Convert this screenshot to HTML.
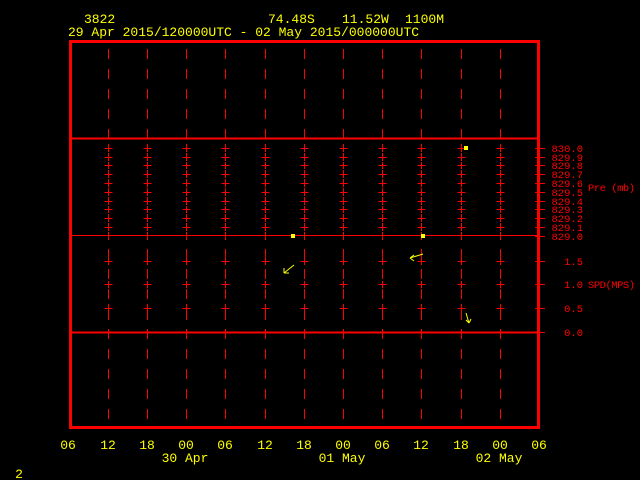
<!DOCTYPE html>
<html><head><meta charset="utf-8"><style>
html,body{margin:0;padding:0;background:#000;width:640px;height:480px;overflow:hidden}
svg{display:block}
text{font-family:"Liberation Mono","DejaVu Sans Mono",monospace;}
</style></head><body>
<svg width="640" height="480" viewBox="0 0 640 480" xmlns="http://www.w3.org/2000/svg" shape-rendering="crispEdges">
<defs>
<path id="col" stroke="#ff0000" stroke-width="1" fill="none" d="M0.5 49V59M0.5 69V79M0.5 89V99M0.5 109V119M0.5 129V139
M0.5 329V339M0.5 349V359M0.5 369V379M0.5 389V399M0.5 409V419
M-3.5 148.5H4.5M0.5 144V152M-3.5 157.5H4.5M0.5 153V161M-3.5 165.5H4.5M0.5 162V169M-3.5 174.5H4.5M0.5 170V178
M-3.5 183.5H4.5M0.5 179V187M-3.5 192.5H4.5M0.5 188V196M-3.5 201.5H4.5M0.5 197V205M-3.5 209.5H4.5M0.5 206V213
M-3.5 218.5H4.5M0.5 214V222M-3.5 227.5H4.5M0.5 223V231M0.5 232V240
M0.5 249V265M0.5 269V279M0.5 281V288M0.5 289V299M0.5 304V320
M-3.5 261.5H4.5M-3.5 284.5H4.5M-3.5 308.5H4.5"/>
</defs>
<g fill="#ffff00" font-size="13">
<text x="84" y="23">3822</text>
<text x="268" y="23">74.48S</text>
<text x="342" y="23">11.52W</text>
<text x="405" y="23">1100M</text>
<text x="68" y="36">29 Apr 2015/120000UTC - 02 May 2015/000000UTC</text>
</g>
<g stroke="#ff0000" fill="none">
<rect x="70.5" y="41.5" width="468" height="386" stroke-width="3"/>
<line x1="70" y1="138.5" x2="540" y2="138.5" stroke-width="2"/>
<line x1="70" y1="235.5" x2="540" y2="235.5" stroke-width="1"/>
<line x1="70" y1="332.5" x2="540" y2="332.5" stroke-width="2"/>
</g>
<use href="#col" x="108"/><use href="#col" x="147"/><use href="#col" x="186"/>
<use href="#col" x="225"/><use href="#col" x="265"/><use href="#col" x="304"/>
<use href="#col" x="343"/><use href="#col" x="382"/><use href="#col" x="421"/>
<use href="#col" x="461"/><use href="#col" x="500"/>
<path stroke="#ff0000" stroke-width="1" fill="none" d="M535 148.5H545M535 157.5H545M535 165.5H545M535 174.5H545M535 183.5H545M535 192.5H545M535 201.5H545M535 209.5H545M535 218.5H545M535 227.5H545M535 236.5H545M535 261.5H545M535 284.5H545M535 308.5H545M535 332.5H545"/>
<g fill="#ff0000" font-size="10.5">
<text x="583" y="152" text-anchor="end">830.0</text>
<text x="583" y="161" text-anchor="end">829.9</text>
<text x="583" y="169" text-anchor="end">829.8</text>
<text x="583" y="178" text-anchor="end">829.7</text>
<text x="583" y="187" text-anchor="end">829.6</text>
<text x="583" y="196" text-anchor="end">829.5</text>
<text x="583" y="205" text-anchor="end">829.4</text>
<text x="583" y="213" text-anchor="end">829.3</text>
<text x="583" y="222" text-anchor="end">829.2</text>
<text x="583" y="231" text-anchor="end">829.1</text>
<text x="583" y="240" text-anchor="end">829.0</text>
<text x="588" y="191" textLength="47">Pre (mb)</text>
<text x="583" y="265" text-anchor="end">1.5</text>
<text x="583" y="288" text-anchor="end">1.0</text>
<text x="583" y="312" text-anchor="end">0.5</text>
<text x="583" y="336" text-anchor="end">0.0</text>
<text x="588" y="288" textLength="47">SPD(MPS)</text>
</g>
<g fill="#ffff00">
<rect x="464" y="146" width="4" height="4"/>
<rect x="291" y="234" width="4" height="4"/>
<rect x="421" y="234" width="4" height="4"/>
</g>
<g stroke="#ffff00" stroke-width="1" fill="none" shape-rendering="auto">
<path d="M294 265 L284 273 M284 273 L284 268 M284 273 L289 273"/>
<path d="M423 254 L410 258 M410 258 L414 255 M410 258 L414 261"/>
<path d="M466 313 L469 323 M469 323 L466 320 M469 323 L471 319"/>
</g>
<g fill="#ffff00" font-size="13" text-anchor="middle">
<text x="68" y="449">06</text><text x="108" y="449">12</text><text x="147" y="449">18</text>
<text x="186" y="449">00</text><text x="225" y="449">06</text><text x="265" y="449">12</text>
<text x="304" y="449">18</text><text x="343" y="449">00</text><text x="382" y="449">06</text>
<text x="421" y="449">12</text><text x="461" y="449">18</text><text x="500" y="449">00</text>
<text x="539" y="449">06</text>
<text x="185" y="462">30 Apr</text>
<text x="342" y="462">01 May</text>
<text x="499" y="462">02 May</text>
<text x="19" y="478">2</text>
</g>
</svg>
</body></html>
